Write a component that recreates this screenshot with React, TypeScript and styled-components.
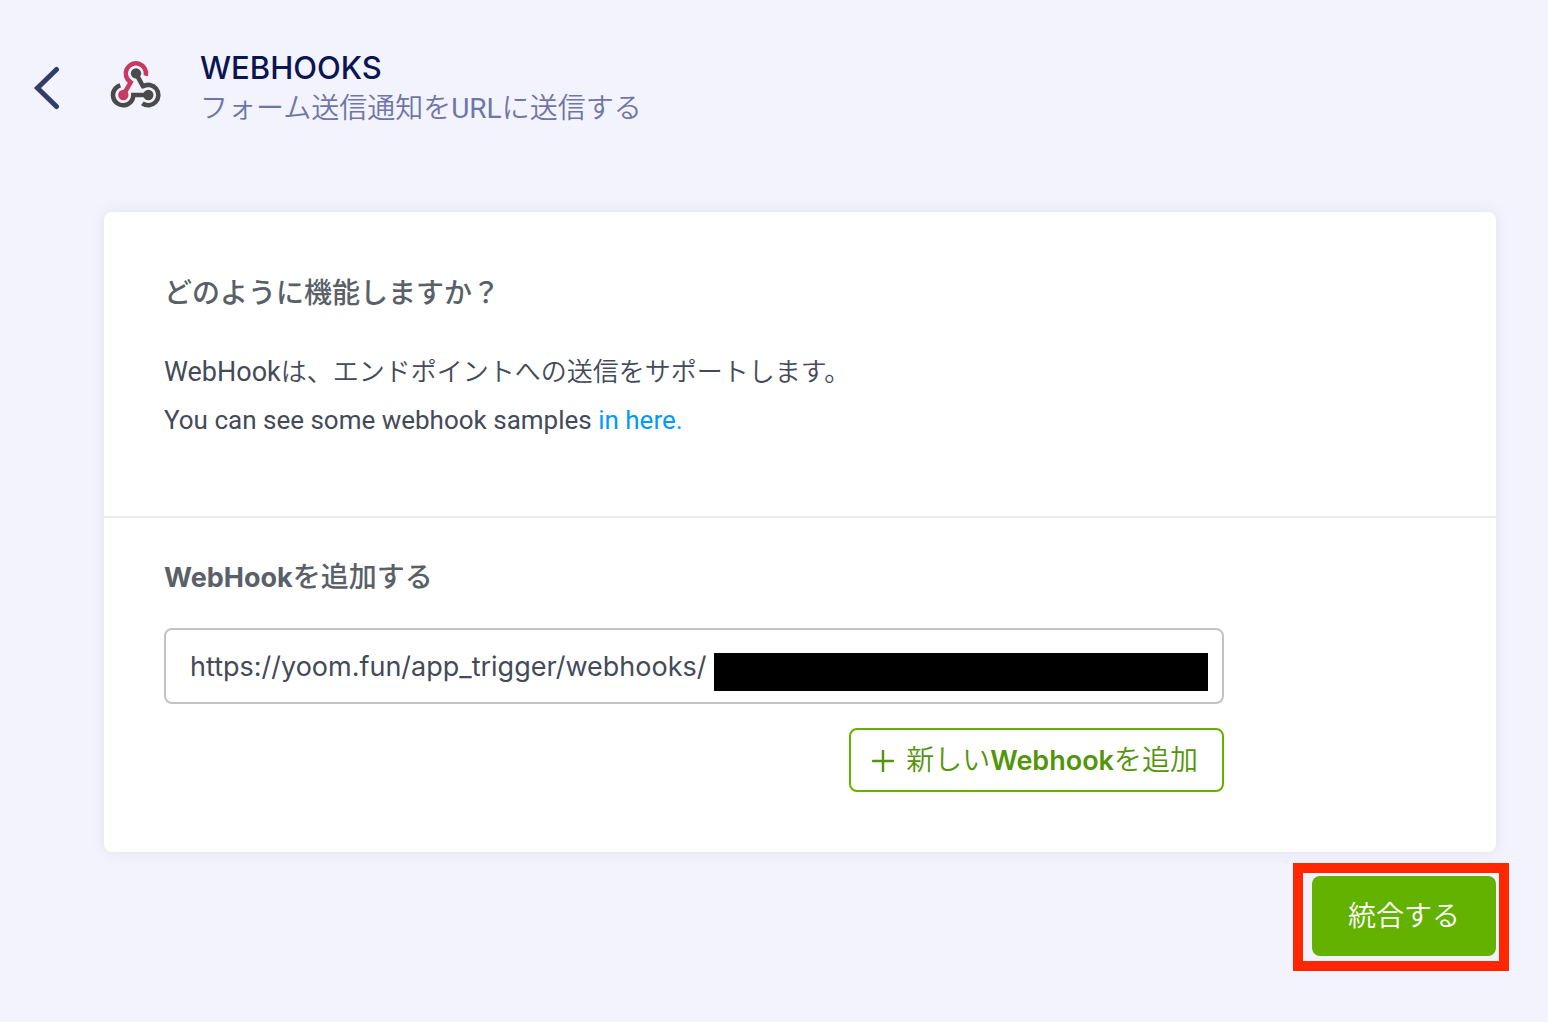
import React, { useState } from "react";
import styled, { createGlobalStyle } from "styled-components";

const latin = `Inter, "Noto Sans CJK JP", sans-serif`;
const body = `Roboto, "Noto Sans CJK JP", sans-serif`;

const GlobalStyle = createGlobalStyle`
  *, *::before, *::after { box-sizing: border-box; }
  html { min-height: 100%; background: #f3f3fe; }
  body { margin: 0; font-family: ${body}; color: #434a58; }
  h1, h2, p { margin: 0; }
`;

const Page = styled.main`
  padding: 48px 52px 66px 32px;
`;

const Header = styled.header`
  display: flex;
  align-items: center;
  height: 80px;
`;

const HeaderText = styled.div`
  align-self: flex-start;
`;

const BackButton = styled.button`
  display: flex;
  width: 30px;
  padding: 0;
  border: 0;
  background: none;
  cursor: pointer;
`;

const LogoBox = styled.div`
  display: flex;
  margin: 0 38px 8px 48px;
`;

const Title = styled.h1`
  font: 500 31px/40px ${latin};
  color: #0a1551;
`;

const Subtitle = styled.p`
  font: 350 28px/42px ${body};
  color: #6f76a7;
`;

const Latin = styled.span<{ $size: number; $weight: number; $family?: string }>`
  font-family: ${p => p.$family ?? latin};
  font-size: ${p => p.$size}px;
  font-weight: ${p => p.$weight};
  line-height: 1;
`;

const Card = styled.div`
  margin: 84px 0 0 72px;
  border-radius: 8px;
  background: #fff;
  box-shadow: 0 0 16px rgba(10, 21, 81, 0.08);
`;

const Section = styled.section`
  padding: 60px;

  & + & {
    padding-top: 38px;
    border-top: 2px solid #ebebf3;
  }
`;

const Heading = styled.h2`
  font: 500 28px/42px ${latin};
  color: #5a6068;
`;

const Description = styled.div`
  margin: 34px 0 12px;
  font: 350 26px/48px ${body};
`;

const Sample = styled.p`
  font-weight: 400;
`;

const Link = styled.a`
  color: #0099ff;
  text-decoration: none;
`;

const Form = styled.form`
  display: flex;
  flex-direction: column;
  align-items: flex-end;
  gap: 24px;
  max-width: 1060px;
  margin-top: 30px;
`;

const Field = styled.div`
  position: relative;
  width: 100%;
`;

const UrlInput = styled.input`
  display: block;
  width: 100%;
  height: 76px;
  padding: 0 24px;
  border: 2px solid #c3c3c4;
  border-radius: 8px;
  background: #fff;
  color: #434a58;
  font: 400 27px ${latin};
`;

const Redaction = styled.span`
  position: absolute;
  top: 25px;
  right: 16px;
  left: 550px;
  height: 38px;
  background: #000;
`;

const AddButton = styled.button`
  display: flex;
  align-items: center;
  gap: 12px;
  height: 64px;
  padding: 2px 24px 0 21px;
  border: 2px solid #64b200;
  border-radius: 8px;
  background: #fff;
  color: #529509;
  font: 350 28px/40px ${body};
  white-space: nowrap;
  cursor: pointer;
`;

const Actions = styled.div`
  display: flex;
  justify-content: flex-end;
  margin-top: 24px;
`;

const SubmitWrap = styled.div`
  position: relative;
`;

const SubmitButton = styled.button`
  width: 184px;
  height: 80px;
  padding: 2px 0 0;
  border: 0;
  border-radius: 8px;
  background: #64b200;
  color: #fff;
  font: 350 28px/40px ${body};
  cursor: pointer;
`;

const Highlight = styled.span`
  position: absolute;
  inset: -13px -13px -15px -19px;
  border: 10px solid #ff2600;
  pointer-events: none;
`;

function BackIcon() {
  return (
    <svg width="30" height="44" viewBox="0 0 30 44" fill="none" aria-hidden="true">
      <path d="M24.5 3.5 5.5 22l19 18.5" stroke="#343c6a" strokeWidth="5" strokeLinecap="round" strokeLinejoin="miter" />
    </svg>
  );
}

function WebhookLogo() {
  return (
    <svg width="52" height="48" viewBox="270 60 156 144" fill="none" role="img" aria-label="Webhooks">
      <g strokeWidth="13.5">
        <path d="M301 136A30.5 30.5 0 1 0 340 165H385" stroke="#4a4a4a" />
        <path d="M348 100 369 139A30.5 30.5 0 1 1 367 190" stroke="#4a4a4a" strokeLinejoin="round" />
        <path d="M377.500 107A30.500 30.500 0 1 0 331 126L335 122 310 165" stroke="#c73a63" strokeLinejoin="bevel" />
      </g>
      <circle cx="348" cy="100" r="15.5" fill="#4a4a4a" />
      <circle cx="385" cy="165" r="15.5" fill="#4a4a4a" />
      <circle cx="310" cy="165" r="15.5" fill="#c73a63" />
    </svg>
  );
}

function PlusIcon() {
  return (
    <svg width="22" height="22" viewBox="0 0 22 22" aria-hidden="true">
      <path d="M11 1v20M1 11h20" stroke="currentColor" strokeWidth="2.4" strokeLinecap="round" />
    </svg>
  );
}

export default function App() {
  const [url, setUrl] = useState("https://yoom.fun/app_trigger/webhooks/");

  return (
    <>
      <GlobalStyle />
      <Page lang="ja">
        <Header>
          <BackButton type="button" aria-label="戻る">
            <BackIcon />
          </BackButton>
          <LogoBox>
            <WebhookLogo />
          </LogoBox>
          <HeaderText>
            <Title>WEBHOOKS</Title>
            <Subtitle>
              フォーム送信通知を<Latin $size={28} $weight={400} $family={body}>URL</Latin>に送信する
            </Subtitle>
          </HeaderText>
        </Header>

        <Card>
          <Section>
            <Heading>どのように機能しますか？</Heading>
            <Description>
              <p>
                <Latin $size={27} $weight={400} $family={body}>WebHook</Latin>は、エンドポイントへの送信をサポートします。
              </p>
              <Sample>
                You can see some webhook samples <Link href="#samples">in here.</Link>
              </Sample>
            </Description>
          </Section>
          <Section>
            <Heading id="add-webhook">
              <Latin $size={27} $weight={700}>WebHook</Latin>を追加する
            </Heading>
            <Form id="webhook-form" onSubmit={e => e.preventDefault()}>
              <Field>
                <UrlInput
                  type="text"
                  aria-labelledby="add-webhook"
                  value={url}
                  onChange={e => setUrl(e.target.value)}
                />
                <Redaction />
              </Field>
              <AddButton type="button">
                <PlusIcon />
                <span>
                  新しい<Latin $size={27} $weight={600}>Webhook</Latin>を追加
                </span>
              </AddButton>
            </Form>
          </Section>
        </Card>

        <Actions>
          <SubmitWrap>
            <SubmitButton type="submit" form="webhook-form">統合する</SubmitButton>
            <Highlight />
          </SubmitWrap>
        </Actions>
      </Page>
    </>
  );
}
